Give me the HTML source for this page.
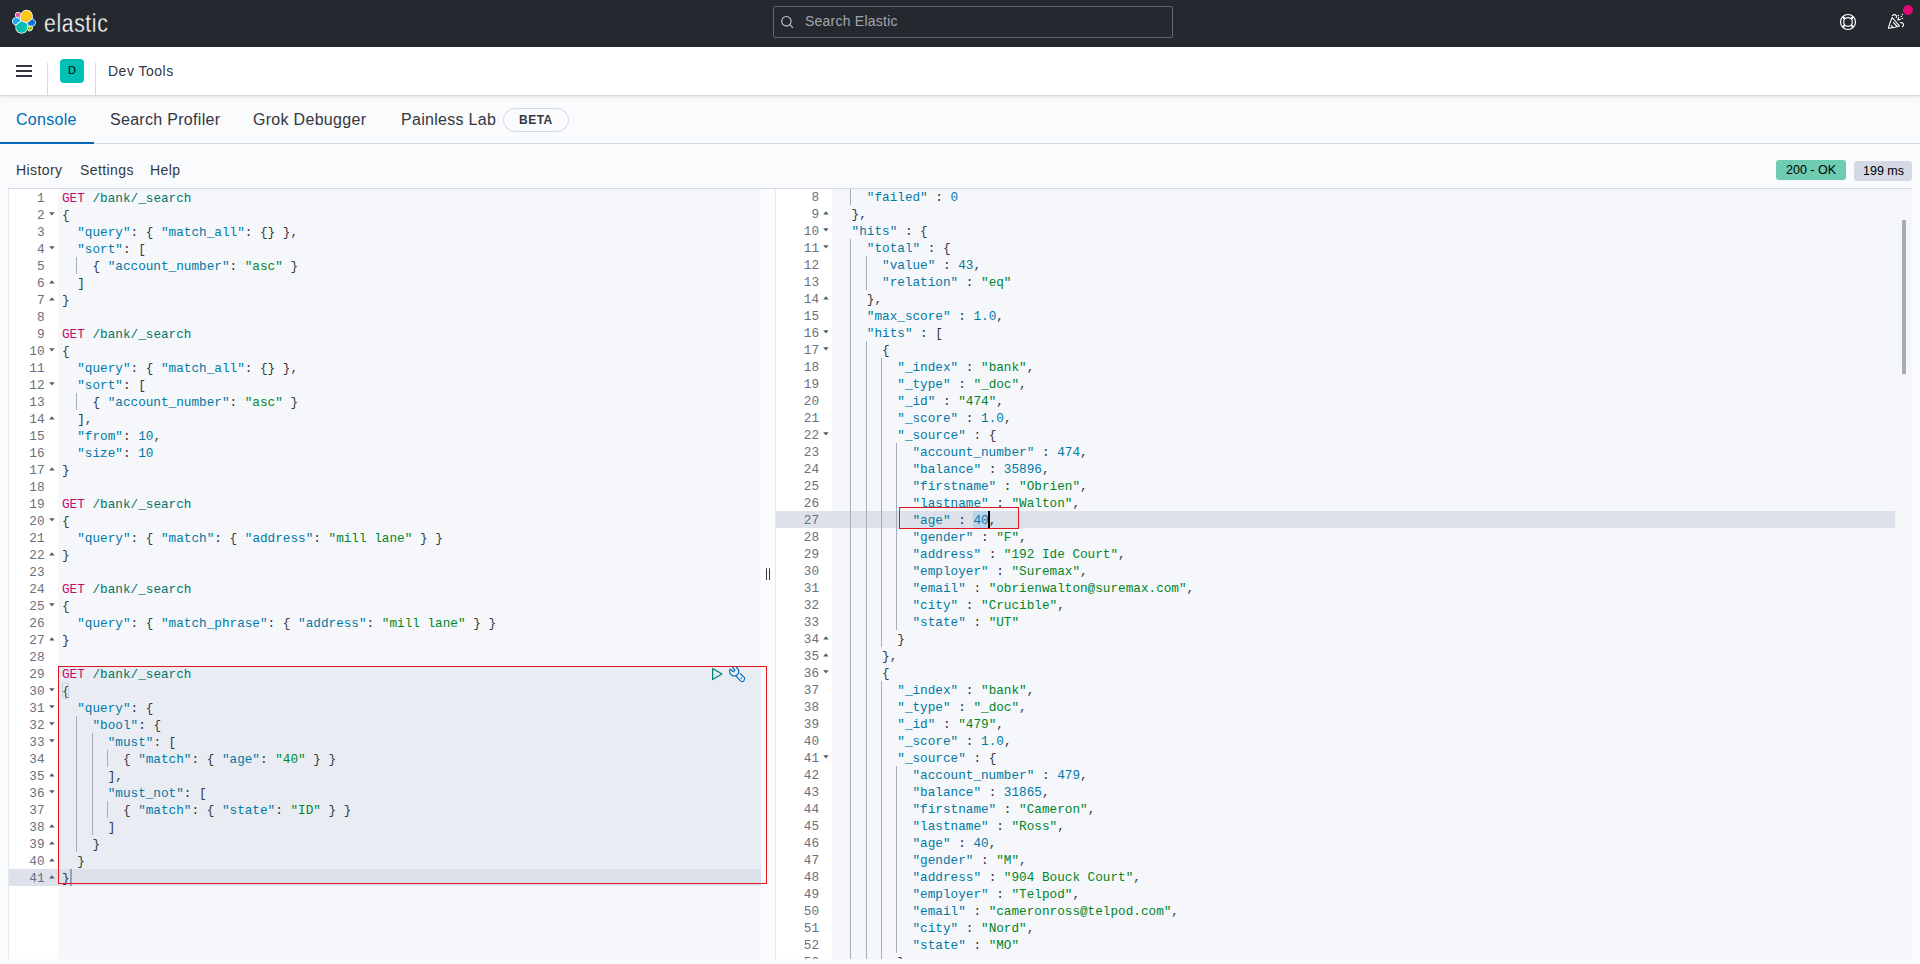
<!DOCTYPE html>
<html><head><meta charset="utf-8"><title>Dev Tools - Elastic</title>
<style>
*{box-sizing:border-box}
html,body{margin:0;padding:0}
body{width:1920px;height:964px;overflow:hidden;position:relative;background:#fafbfd;font-family:"Liberation Sans",sans-serif;color:#343741}
.abs{position:absolute}
#hdr{position:absolute;left:0;top:0;width:1920px;height:47px;background:#25282f}
#band{position:absolute;left:0;top:47px;width:1920px;height:49px;background:#fff;border-bottom:1px solid #d3dae6;box-shadow:0 1px 3px rgba(0,0,0,.1)}
.t{position:absolute;white-space:pre;line-height:1}
/* editors */
.ed{position:absolute;top:188px;height:771px;overflow:hidden}
.gut{position:absolute;background:#fff}
.cnt{position:absolute;background:#f5f7fa}
.ln,.gn{position:absolute;height:17px;line-height:17px;font-family:"Liberation Mono",monospace;font-size:12.7px;white-space:pre;color:#343741;padding-top:1px}
.gn{width:40px;text-align:right;color:#69707d}
.m{color:#c80a68}.url{color:#00756c}.k{color:#0079a5}.s{color:#00852a}.n{color:#0079a5}
.ig{position:absolute;width:1px;background:#a5adba}
.fd,.fu{position:absolute;width:0;height:0;border-left:2.6px solid transparent;border-right:2.6px solid transparent}
.fo{position:absolute;fill:#535862}
</style></head><body>
<div id="hdr">
  <svg class="abs" style="left:10px;top:8px" width="28" height="28" viewBox="0 0 28 28"><g stroke="#fff" stroke-width="1.5" stroke-linejoin="round" style="paint-order:stroke"><polygon fill="#fec514" points="11.04,8.13 11.91,5.23 13.94,3.19 16.26,2.47 18.88,2.90 20.91,4.65 22.07,7.26 22.07,9.88 21.49,11.04 16.85,14.52 11.62,12.78 10.75,10.46"/><polygon fill="#f04e98" points="5.81,6.10 7.26,4.65 9.58,4.94 10.17,6.10 9.88,8.42 8.71,9.00 6.39,8.71 5.81,7.55"/><polygon fill="#1ba9f5" points="2.90,12.20 4.36,10.17 6.68,9.88 9.58,11.04 10.46,12.78 5.81,16.85 3.78,15.68 2.76,13.94"/><polygon fill="#00bfb3" points="6.10,17.43 11.33,13.36 16.85,15.39 17.43,17.43 17.14,20.91 15.10,23.82 11.62,24.98 8.42,24.11 6.39,21.49"/><polygon fill="#0b6fd6" points="17.43,15.10 22.36,11.04 24.40,12.49 25.27,14.52 24.40,16.85 22.95,17.72 20.33,17.72 18.01,16.56"/><polygon fill="#93c90e" points="18.01,18.88 21.78,18.59 22.36,20.33 21.20,22.07 18.88,22.65 18.01,20.91"/></g></svg>
  <div class="t" style="left:44px;top:11px;font-size:25px;color:#fff;letter-spacing:.7px;transform:scaleX(.85);transform-origin:0 0;-webkit-text-stroke:0.35px #25282f">elastic</div>
  <div class="abs" style="left:773px;top:6px;width:400px;height:32px;border:1px solid #62666e;border-radius:2px;background:#25282f"></div>
  <svg class="abs" style="left:780px;top:15px" width="14" height="14" viewBox="0 0 14 14"><circle cx="6.4" cy="6.2" r="4.7" fill="none" stroke="#c5c9d0" stroke-width="1.1"/><path d="M9.8 9.6 L13 12.8" stroke="#c5c9d0" stroke-width="1.1"/></svg>
  <div class="t" style="left:805px;top:14.4px;font-size:14px;color:#a3a6ac;letter-spacing:.23px">Search Elastic</div>
  <svg class="abs" style="left:1838px;top:12px" width="20" height="20" viewBox="0 0 20 20">
    <g fill="none" stroke="#fff"><circle cx="10" cy="10" r="7.5" stroke-width="1.2"/><circle cx="10" cy="10" r="4.3" stroke-width="1.2"/>
    <path stroke-width="2.1" d="M6.9 6.9 L4.7 4.7 M13.1 6.9 L15.3 4.7 M6.9 13.1 L4.7 15.3 M13.1 13.1 L15.3 15.3"/></g>
  </svg>
  <svg class="abs" style="left:1884px;top:8px" width="28" height="24" viewBox="0 0 28 24">
    <g fill="none" stroke="#fff" stroke-width="1.1" stroke-linecap="round" stroke-linejoin="round">
      <path d="M4.4 20.1 Q6 14 8.2 9.5 L15.4 17.9 Q10 19.6 4.4 20.1 Z"/>
      <path d="M9.3 14.3 L12.8 18"/><path d="M7.3 17.5 L8.5 18.7"/>
      <path d="M8.3 7.6 Q10.4 5.6 12.3 7.6 Q12.8 8.6 12.2 9.6"/>
      <path d="M13.9 12 L14.6 9.4 M13.9 12 L16.3 11.4"/>
      <path d="M16.4 14.7 Q18.6 14.3 19.5 16.2 Q19.8 17.6 18.4 18.8"/>
    </g>
    <g fill="#fff"><circle cx="14.4" cy="7.5" r=".75"/><circle cx="18.4" cy="6.4" r=".75"/><circle cx="17.4" cy="8.5" r=".75"/><circle cx="18.4" cy="10.5" r=".75"/></g>
  </svg>
  <div class="abs" style="left:1902.6px;top:4.6px;width:10.6px;height:10.6px;border-radius:50%;background:#dd0a73"></div>
</div>
<div id="band">
  <div class="abs" style="left:16px;top:18px;width:16px;height:2px;background:#343741"></div><div class="abs" style="left:16px;top:23px;width:16px;height:2px;background:#343741"></div><div class="abs" style="left:16px;top:28px;width:16px;height:2px;background:#343741"></div>
  <div class="abs" style="left:47px;top:16px;width:1px;height:32px;background:#d3dae6"></div>
  <div class="abs" style="left:60px;top:12px;width:24px;height:24px;border-radius:4px;background:#00bfb3"></div>
  <div class="t" style="left:68px;top:18px;font-size:11px;color:#000">D</div>
  <div class="abs" style="left:95px;top:16px;width:1px;height:32px;background:#d3dae6"></div>
  <div class="t" style="left:108px;top:17px;font-size:14px;letter-spacing:.5px">Dev Tools</div>
</div>
<!-- tabs -->
<div class="t" style="left:16px;top:112px;font-size:16px;letter-spacing:.3px;color:#006bb4">Console</div>
<div class="t" style="left:110px;top:112px;font-size:16px;letter-spacing:.3px">Search Profiler</div>
<div class="t" style="left:253px;top:112px;font-size:16px;letter-spacing:.3px">Grok Debugger</div>
<div class="t" style="left:401px;top:112px;font-size:16px;letter-spacing:.3px">Painless Lab</div>
<div class="abs" style="left:503px;top:108px;width:66px;height:24px;border:1px solid #d3dae6;border-radius:12px"></div>
<div class="t" style="left:519px;top:114px;font-size:12px;font-weight:bold;letter-spacing:.5px">BETA</div>
<div class="abs" style="left:0;top:143px;width:1920px;height:1px;background:#d3dae6"></div>
<div class="abs" style="left:0;top:142px;width:94px;height:2px;background:#006bb4"></div>
<!-- menu -->
<div class="t" style="left:16px;top:163.4px;font-size:14px;letter-spacing:.4px">History</div>
<div class="t" style="left:80px;top:163.4px;font-size:14px;letter-spacing:.4px">Settings</div>
<div class="t" style="left:150px;top:163.4px;font-size:14px;letter-spacing:.4px">Help</div>
<div class="abs" style="left:1776px;top:160px;width:70px;height:20px;border-radius:3px;background:#6dccb1"></div>
<div class="t" style="left:1786px;top:164px;font-size:12.5px;color:#000">200 - OK</div>
<div class="abs" style="left:1854px;top:161px;width:58px;height:20px;border-radius:3px;background:#d3dae6"></div>
<div class="t" style="left:1863px;top:165px;font-size:12.5px;color:#000">199 ms</div>
<!-- editor frame -->
<div class="abs" style="left:8px;top:188px;width:1904px;height:1px;background:#d3dae6"></div>
<!-- left editor -->
<div class="abs" style="left:8px;top:189px;width:1px;height:770px;background:#e4e8ef"></div>
<div class="gut" style="left:9px;top:189px;width:49px;height:770px"></div>
<div class="cnt" style="left:58px;top:189px;width:703px;height:770px"></div>
<!-- request block highlight -->
<div class="abs" style="left:58px;top:666px;width:703px;height:203px;background:#e9edf3"></div>
<div class="abs" style="left:9px;top:869px;width:752px;height:17px;background:#dde2ea"></div>
<div class="ig" style="left:76px;top:257px;height:17px"></div>
<div class="ig" style="left:76px;top:393px;height:17px"></div>
<div class="ig" style="left:76px;top:716px;height:136px"></div>
<div class="ig" style="left:92px;top:733px;height:102px"></div>
<div class="ig" style="left:107px;top:750px;height:17px"></div>
<div class="ig" style="left:107px;top:801px;height:17px"></div>
<div class="gn" style="top:189px;left:4.60px">1</div>
<div class="gn" style="top:206px;left:4.60px">2</div>
<svg class="fo" style="top:212.4px;left:49.0px" width="6" height="4" viewBox="0 0 6 4"><path d="M0.2 0.3 H5.6 L2.9 3.5 Z"/></svg>
<div class="gn" style="top:223px;left:4.60px">3</div>
<div class="gn" style="top:240px;left:4.60px">4</div>
<svg class="fo" style="top:246.4px;left:49.0px" width="6" height="4" viewBox="0 0 6 4"><path d="M0.2 0.3 H5.6 L2.9 3.5 Z"/></svg>
<div class="gn" style="top:257px;left:4.60px">5</div>
<div class="gn" style="top:274px;left:4.60px">6</div>
<svg class="fo" style="top:280.0px;left:49.0px" width="6" height="4" viewBox="0 0 6 4"><path d="M0.2 3.5 H5.6 L2.9 0.3 Z"/></svg>
<div class="gn" style="top:291px;left:4.60px">7</div>
<svg class="fo" style="top:297.0px;left:49.0px" width="6" height="4" viewBox="0 0 6 4"><path d="M0.2 3.5 H5.6 L2.9 0.3 Z"/></svg>
<div class="gn" style="top:308px;left:4.60px">8</div>
<div class="gn" style="top:325px;left:4.60px">9</div>
<div class="gn" style="top:342px;left:4.60px">10</div>
<svg class="fo" style="top:348.4px;left:49.0px" width="6" height="4" viewBox="0 0 6 4"><path d="M0.2 0.3 H5.6 L2.9 3.5 Z"/></svg>
<div class="gn" style="top:359px;left:4.60px">11</div>
<div class="gn" style="top:376px;left:4.60px">12</div>
<svg class="fo" style="top:382.4px;left:49.0px" width="6" height="4" viewBox="0 0 6 4"><path d="M0.2 0.3 H5.6 L2.9 3.5 Z"/></svg>
<div class="gn" style="top:393px;left:4.60px">13</div>
<div class="gn" style="top:410px;left:4.60px">14</div>
<svg class="fo" style="top:416.0px;left:49.0px" width="6" height="4" viewBox="0 0 6 4"><path d="M0.2 3.5 H5.6 L2.9 0.3 Z"/></svg>
<div class="gn" style="top:427px;left:4.60px">15</div>
<div class="gn" style="top:444px;left:4.60px">16</div>
<div class="gn" style="top:461px;left:4.60px">17</div>
<svg class="fo" style="top:467.0px;left:49.0px" width="6" height="4" viewBox="0 0 6 4"><path d="M0.2 3.5 H5.6 L2.9 0.3 Z"/></svg>
<div class="gn" style="top:478px;left:4.60px">18</div>
<div class="gn" style="top:495px;left:4.60px">19</div>
<div class="gn" style="top:512px;left:4.60px">20</div>
<svg class="fo" style="top:518.4px;left:49.0px" width="6" height="4" viewBox="0 0 6 4"><path d="M0.2 0.3 H5.6 L2.9 3.5 Z"/></svg>
<div class="gn" style="top:529px;left:4.60px">21</div>
<div class="gn" style="top:546px;left:4.60px">22</div>
<svg class="fo" style="top:552.0px;left:49.0px" width="6" height="4" viewBox="0 0 6 4"><path d="M0.2 3.5 H5.6 L2.9 0.3 Z"/></svg>
<div class="gn" style="top:563px;left:4.60px">23</div>
<div class="gn" style="top:580px;left:4.60px">24</div>
<div class="gn" style="top:597px;left:4.60px">25</div>
<svg class="fo" style="top:603.4px;left:49.0px" width="6" height="4" viewBox="0 0 6 4"><path d="M0.2 0.3 H5.6 L2.9 3.5 Z"/></svg>
<div class="gn" style="top:614px;left:4.60px">26</div>
<div class="gn" style="top:631px;left:4.60px">27</div>
<svg class="fo" style="top:637.0px;left:49.0px" width="6" height="4" viewBox="0 0 6 4"><path d="M0.2 3.5 H5.6 L2.9 0.3 Z"/></svg>
<div class="gn" style="top:648px;left:4.60px">28</div>
<div class="gn" style="top:665px;left:4.60px">29</div>
<div class="gn" style="top:682px;left:4.60px">30</div>
<svg class="fo" style="top:688.4px;left:49.0px" width="6" height="4" viewBox="0 0 6 4"><path d="M0.2 0.3 H5.6 L2.9 3.5 Z"/></svg>
<div class="gn" style="top:699px;left:4.60px">31</div>
<svg class="fo" style="top:705.4px;left:49.0px" width="6" height="4" viewBox="0 0 6 4"><path d="M0.2 0.3 H5.6 L2.9 3.5 Z"/></svg>
<div class="gn" style="top:716px;left:4.60px">32</div>
<svg class="fo" style="top:722.4px;left:49.0px" width="6" height="4" viewBox="0 0 6 4"><path d="M0.2 0.3 H5.6 L2.9 3.5 Z"/></svg>
<div class="gn" style="top:733px;left:4.60px">33</div>
<svg class="fo" style="top:739.4px;left:49.0px" width="6" height="4" viewBox="0 0 6 4"><path d="M0.2 0.3 H5.6 L2.9 3.5 Z"/></svg>
<div class="gn" style="top:750px;left:4.60px">34</div>
<div class="gn" style="top:767px;left:4.60px">35</div>
<svg class="fo" style="top:773.0px;left:49.0px" width="6" height="4" viewBox="0 0 6 4"><path d="M0.2 3.5 H5.6 L2.9 0.3 Z"/></svg>
<div class="gn" style="top:784px;left:4.60px">36</div>
<svg class="fo" style="top:790.4px;left:49.0px" width="6" height="4" viewBox="0 0 6 4"><path d="M0.2 0.3 H5.6 L2.9 3.5 Z"/></svg>
<div class="gn" style="top:801px;left:4.60px">37</div>
<div class="gn" style="top:818px;left:4.60px">38</div>
<svg class="fo" style="top:824.0px;left:49.0px" width="6" height="4" viewBox="0 0 6 4"><path d="M0.2 3.5 H5.6 L2.9 0.3 Z"/></svg>
<div class="gn" style="top:835px;left:4.60px">39</div>
<svg class="fo" style="top:841.0px;left:49.0px" width="6" height="4" viewBox="0 0 6 4"><path d="M0.2 3.5 H5.6 L2.9 0.3 Z"/></svg>
<div class="gn" style="top:852px;left:4.60px">40</div>
<svg class="fo" style="top:858.0px;left:49.0px" width="6" height="4" viewBox="0 0 6 4"><path d="M0.2 3.5 H5.6 L2.9 0.3 Z"/></svg>
<div class="gn" style="top:869px;left:4.60px">41</div>
<svg class="fo" style="top:875.0px;left:49.0px" width="6" height="4" viewBox="0 0 6 4"><path d="M0.2 3.5 H5.6 L2.9 0.3 Z"/></svg>
<div class="ln" style="top:189px;left:62.00px"><span class="m">GET</span> <span class="url">/bank/_search</span></div>
<div class="ln" style="top:206px;left:62.00px">{</div>
<div class="ln" style="top:223px;left:62.00px">  <span class="k">&quot;query&quot;</span>: { <span class="k">&quot;match_all&quot;</span>: {} },</div>
<div class="ln" style="top:240px;left:62.00px">  <span class="k">&quot;sort&quot;</span>: [</div>
<div class="ln" style="top:257px;left:62.00px">    { <span class="k">&quot;account_number&quot;</span>: <span class="s">&quot;asc&quot;</span> }</div>
<div class="ln" style="top:274px;left:62.00px">  ]</div>
<div class="ln" style="top:291px;left:62.00px">}</div>
<div class="ln" style="top:308px;left:62.00px"></div>
<div class="ln" style="top:325px;left:62.00px"><span class="m">GET</span> <span class="url">/bank/_search</span></div>
<div class="ln" style="top:342px;left:62.00px">{</div>
<div class="ln" style="top:359px;left:62.00px">  <span class="k">&quot;query&quot;</span>: { <span class="k">&quot;match_all&quot;</span>: {} },</div>
<div class="ln" style="top:376px;left:62.00px">  <span class="k">&quot;sort&quot;</span>: [</div>
<div class="ln" style="top:393px;left:62.00px">    { <span class="k">&quot;account_number&quot;</span>: <span class="s">&quot;asc&quot;</span> }</div>
<div class="ln" style="top:410px;left:62.00px">  ],</div>
<div class="ln" style="top:427px;left:62.00px">  <span class="k">&quot;from&quot;</span>: <span class="n">10</span>,</div>
<div class="ln" style="top:444px;left:62.00px">  <span class="k">&quot;size&quot;</span>: <span class="n">10</span></div>
<div class="ln" style="top:461px;left:62.00px">}</div>
<div class="ln" style="top:478px;left:62.00px"></div>
<div class="ln" style="top:495px;left:62.00px"><span class="m">GET</span> <span class="url">/bank/_search</span></div>
<div class="ln" style="top:512px;left:62.00px">{</div>
<div class="ln" style="top:529px;left:62.00px">  <span class="k">&quot;query&quot;</span>: { <span class="k">&quot;match&quot;</span>: { <span class="k">&quot;address&quot;</span>: <span class="s">&quot;mill lane&quot;</span> } }</div>
<div class="ln" style="top:546px;left:62.00px">}</div>
<div class="ln" style="top:563px;left:62.00px"></div>
<div class="ln" style="top:580px;left:62.00px"><span class="m">GET</span> <span class="url">/bank/_search</span></div>
<div class="ln" style="top:597px;left:62.00px">{</div>
<div class="ln" style="top:614px;left:62.00px">  <span class="k">&quot;query&quot;</span>: { <span class="k">&quot;match_phrase&quot;</span>: { <span class="k">&quot;address&quot;</span>: <span class="s">&quot;mill lane&quot;</span> } }</div>
<div class="ln" style="top:631px;left:62.00px">}</div>
<div class="ln" style="top:648px;left:62.00px"></div>
<div class="ln" style="top:665px;left:62.00px"><span class="m">GET</span> <span class="url">/bank/_search</span></div>
<div class="ln" style="top:682px;left:62.00px">{</div>
<div class="ln" style="top:699px;left:62.00px">  <span class="k">&quot;query&quot;</span>: {</div>
<div class="ln" style="top:716px;left:62.00px">    <span class="k">&quot;bool&quot;</span>: {</div>
<div class="ln" style="top:733px;left:62.00px">      <span class="k">&quot;must&quot;</span>: [</div>
<div class="ln" style="top:750px;left:62.00px">        { <span class="k">&quot;match&quot;</span>: { <span class="k">&quot;age&quot;</span>: <span class="s">&quot;40&quot;</span> } }</div>
<div class="ln" style="top:767px;left:62.00px">      ],</div>
<div class="ln" style="top:784px;left:62.00px">      <span class="k">&quot;must_not&quot;</span>: [</div>
<div class="ln" style="top:801px;left:62.00px">        { <span class="k">&quot;match&quot;</span>: { <span class="k">&quot;state&quot;</span>: <span class="s">&quot;ID&quot;</span> } }</div>
<div class="ln" style="top:818px;left:62.00px">      ]</div>
<div class="ln" style="top:835px;left:62.00px">    }</div>
<div class="ln" style="top:852px;left:62.00px">  }</div>
<div class="ln" style="top:869px;left:62.00px">}</div>
<div class="abs" style="left:61.5px;top:681.5px;width:7.5px;height:17px;border:1px solid #c9ced6;border-radius:3px"></div>
<div class="abs" style="left:70px;top:869px;width:1.5px;height:17px;background:#98a1b0"></div>
<div class="abs" style="left:58px;top:666px;width:709px;height:218px;border:1px solid #e0151f"></div>
<svg class="abs" style="left:711px;top:667px" width="13" height="14" viewBox="0 0 13 14"><path d="M1.6 1.5 L11 7 L1.6 12.5 Z" fill="none" stroke="#017d73" stroke-width="1.2" stroke-linejoin="round"/></svg>
<svg class="abs" style="left:726px;top:664px" width="22" height="20" viewBox="0 0 22 20"><g fill="none" stroke="#006bb4" stroke-width="1.15" stroke-linejoin="round"><path d="M6.4 3.1 L8.9 6.2 L7.5 7.7 L4.15 5.19 A4.6 4.6 0 1 0 9.96 3.11"/><path d="M9.34 11.3 L14.5 16.9 A2.6 2.6 0 0 0 18.4 13.6 L14.2 9.5"/></g><circle cx="15.1" cy="14.1" r=".75" fill="#006bb4"/></svg>
<!-- resize handle -->
<div class="abs" style="left:766px;top:568px;width:1.2px;height:12px;background:#343741;border-radius:1px"></div>
<div class="abs" style="left:769px;top:568px;width:1.2px;height:12px;background:#343741;border-radius:1px"></div>
<!-- right editor -->
<div class="abs" style="left:775px;top:189px;width:1px;height:770px;background:#e4e8ef"></div>
<div class="gut" style="left:776px;top:189px;width:56px;height:770px"></div>
<div class="cnt" style="left:832px;top:189px;width:1080px;height:770px"></div>
<div class="abs" style="left:776px;top:511px;width:1119px;height:17px;background:#dde2ea"></div>
<div class="abs" style="left:973px;top:511px;width:15px;height:17px;background:#b9d4ea"></div>
<div class="ed" style="left:775px;width:1137px;top:189px;height:770px">
<div style="position:absolute;left:-775px;top:-189px;width:1920px;height:964px">
<div class="ig" style="left:850px;top:188px;height:17px"></div>
<div class="ig" style="left:850px;top:239px;height:731px"></div>
<div class="ig" style="left:866px;top:256px;height:34px"></div>
<div class="ig" style="left:866px;top:341px;height:629px"></div>
<div class="ig" style="left:881px;top:358px;height:289px"></div>
<div class="ig" style="left:881px;top:681px;height:289px"></div>
<div class="ig" style="left:896px;top:443px;height:187px"></div>
<div class="ig" style="left:896px;top:766px;height:187px"></div>
<div class="gn" style="top:188px;left:779.00px">8</div>
<div class="gn" style="top:205px;left:779.00px">9</div>
<svg class="fo" style="top:211.0px;left:823.0px" width="6" height="4" viewBox="0 0 6 4"><path d="M0.2 3.5 H5.6 L2.9 0.3 Z"/></svg>
<div class="gn" style="top:222px;left:779.00px">10</div>
<svg class="fo" style="top:228.4px;left:823.0px" width="6" height="4" viewBox="0 0 6 4"><path d="M0.2 0.3 H5.6 L2.9 3.5 Z"/></svg>
<div class="gn" style="top:239px;left:779.00px">11</div>
<svg class="fo" style="top:245.4px;left:823.0px" width="6" height="4" viewBox="0 0 6 4"><path d="M0.2 0.3 H5.6 L2.9 3.5 Z"/></svg>
<div class="gn" style="top:256px;left:779.00px">12</div>
<div class="gn" style="top:273px;left:779.00px">13</div>
<div class="gn" style="top:290px;left:779.00px">14</div>
<svg class="fo" style="top:296.0px;left:823.0px" width="6" height="4" viewBox="0 0 6 4"><path d="M0.2 3.5 H5.6 L2.9 0.3 Z"/></svg>
<div class="gn" style="top:307px;left:779.00px">15</div>
<div class="gn" style="top:324px;left:779.00px">16</div>
<svg class="fo" style="top:330.4px;left:823.0px" width="6" height="4" viewBox="0 0 6 4"><path d="M0.2 0.3 H5.6 L2.9 3.5 Z"/></svg>
<div class="gn" style="top:341px;left:779.00px">17</div>
<svg class="fo" style="top:347.4px;left:823.0px" width="6" height="4" viewBox="0 0 6 4"><path d="M0.2 0.3 H5.6 L2.9 3.5 Z"/></svg>
<div class="gn" style="top:358px;left:779.00px">18</div>
<div class="gn" style="top:375px;left:779.00px">19</div>
<div class="gn" style="top:392px;left:779.00px">20</div>
<div class="gn" style="top:409px;left:779.00px">21</div>
<div class="gn" style="top:426px;left:779.00px">22</div>
<svg class="fo" style="top:432.4px;left:823.0px" width="6" height="4" viewBox="0 0 6 4"><path d="M0.2 0.3 H5.6 L2.9 3.5 Z"/></svg>
<div class="gn" style="top:443px;left:779.00px">23</div>
<div class="gn" style="top:460px;left:779.00px">24</div>
<div class="gn" style="top:477px;left:779.00px">25</div>
<div class="gn" style="top:494px;left:779.00px">26</div>
<div class="gn" style="top:511px;left:779.00px">27</div>
<div class="gn" style="top:528px;left:779.00px">28</div>
<div class="gn" style="top:545px;left:779.00px">29</div>
<div class="gn" style="top:562px;left:779.00px">30</div>
<div class="gn" style="top:579px;left:779.00px">31</div>
<div class="gn" style="top:596px;left:779.00px">32</div>
<div class="gn" style="top:613px;left:779.00px">33</div>
<div class="gn" style="top:630px;left:779.00px">34</div>
<svg class="fo" style="top:636.0px;left:823.0px" width="6" height="4" viewBox="0 0 6 4"><path d="M0.2 3.5 H5.6 L2.9 0.3 Z"/></svg>
<div class="gn" style="top:647px;left:779.00px">35</div>
<svg class="fo" style="top:653.0px;left:823.0px" width="6" height="4" viewBox="0 0 6 4"><path d="M0.2 3.5 H5.6 L2.9 0.3 Z"/></svg>
<div class="gn" style="top:664px;left:779.00px">36</div>
<svg class="fo" style="top:670.4px;left:823.0px" width="6" height="4" viewBox="0 0 6 4"><path d="M0.2 0.3 H5.6 L2.9 3.5 Z"/></svg>
<div class="gn" style="top:681px;left:779.00px">37</div>
<div class="gn" style="top:698px;left:779.00px">38</div>
<div class="gn" style="top:715px;left:779.00px">39</div>
<div class="gn" style="top:732px;left:779.00px">40</div>
<div class="gn" style="top:749px;left:779.00px">41</div>
<svg class="fo" style="top:755.4px;left:823.0px" width="6" height="4" viewBox="0 0 6 4"><path d="M0.2 0.3 H5.6 L2.9 3.5 Z"/></svg>
<div class="gn" style="top:766px;left:779.00px">42</div>
<div class="gn" style="top:783px;left:779.00px">43</div>
<div class="gn" style="top:800px;left:779.00px">44</div>
<div class="gn" style="top:817px;left:779.00px">45</div>
<div class="gn" style="top:834px;left:779.00px">46</div>
<div class="gn" style="top:851px;left:779.00px">47</div>
<div class="gn" style="top:868px;left:779.00px">48</div>
<div class="gn" style="top:885px;left:779.00px">49</div>
<div class="gn" style="top:902px;left:779.00px">50</div>
<div class="gn" style="top:919px;left:779.00px">51</div>
<div class="gn" style="top:936px;left:779.00px">52</div>
<div class="gn" style="top:953px;left:779.00px">53</div>
<svg class="fo" style="top:959.0px;left:823.0px" width="6" height="4" viewBox="0 0 6 4"><path d="M0.2 3.5 H5.6 L2.9 0.3 Z"/></svg>
<div class="ln" style="top:188px;left:836.35px">    <span class="k">&quot;failed&quot;</span> : <span class="n">0</span></div>
<div class="ln" style="top:205px;left:836.35px">  },</div>
<div class="ln" style="top:222px;left:836.35px">  <span class="k">&quot;hits&quot;</span> : {</div>
<div class="ln" style="top:239px;left:836.35px">    <span class="k">&quot;total&quot;</span> : {</div>
<div class="ln" style="top:256px;left:836.35px">      <span class="k">&quot;value&quot;</span> : <span class="n">43</span>,</div>
<div class="ln" style="top:273px;left:836.35px">      <span class="k">&quot;relation&quot;</span> : <span class="s">&quot;eq&quot;</span></div>
<div class="ln" style="top:290px;left:836.35px">    },</div>
<div class="ln" style="top:307px;left:836.35px">    <span class="k">&quot;max_score&quot;</span> : <span class="n">1.0</span>,</div>
<div class="ln" style="top:324px;left:836.35px">    <span class="k">&quot;hits&quot;</span> : [</div>
<div class="ln" style="top:341px;left:836.35px">      {</div>
<div class="ln" style="top:358px;left:836.35px">        <span class="k">&quot;_index&quot;</span> : <span class="s">&quot;bank&quot;</span>,</div>
<div class="ln" style="top:375px;left:836.35px">        <span class="k">&quot;_type&quot;</span> : <span class="s">&quot;_doc&quot;</span>,</div>
<div class="ln" style="top:392px;left:836.35px">        <span class="k">&quot;_id&quot;</span> : <span class="s">&quot;474&quot;</span>,</div>
<div class="ln" style="top:409px;left:836.35px">        <span class="k">&quot;_score&quot;</span> : <span class="n">1.0</span>,</div>
<div class="ln" style="top:426px;left:836.35px">        <span class="k">&quot;_source&quot;</span> : {</div>
<div class="ln" style="top:443px;left:836.35px">          <span class="k">&quot;account_number&quot;</span> : <span class="n">474</span>,</div>
<div class="ln" style="top:460px;left:836.35px">          <span class="k">&quot;balance&quot;</span> : <span class="n">35896</span>,</div>
<div class="ln" style="top:477px;left:836.35px">          <span class="k">&quot;firstname&quot;</span> : <span class="s">&quot;Obrien&quot;</span>,</div>
<div class="ln" style="top:494px;left:836.35px">          <span class="k">&quot;lastname&quot;</span> : <span class="s">&quot;Walton&quot;</span>,</div>
<div class="ln" style="top:511px;left:836.35px">          <span class="k">&quot;age&quot;</span> : <span class="n">40</span>,</div>
<div class="ln" style="top:528px;left:836.35px">          <span class="k">&quot;gender&quot;</span> : <span class="s">&quot;F&quot;</span>,</div>
<div class="ln" style="top:545px;left:836.35px">          <span class="k">&quot;address&quot;</span> : <span class="s">&quot;192 Ide Court&quot;</span>,</div>
<div class="ln" style="top:562px;left:836.35px">          <span class="k">&quot;employer&quot;</span> : <span class="s">&quot;Suremax&quot;</span>,</div>
<div class="ln" style="top:579px;left:836.35px">          <span class="k">&quot;email&quot;</span> : <span class="s">&quot;obrienwalton@suremax.com&quot;</span>,</div>
<div class="ln" style="top:596px;left:836.35px">          <span class="k">&quot;city&quot;</span> : <span class="s">&quot;Crucible&quot;</span>,</div>
<div class="ln" style="top:613px;left:836.35px">          <span class="k">&quot;state&quot;</span> : <span class="s">&quot;UT&quot;</span></div>
<div class="ln" style="top:630px;left:836.35px">        }</div>
<div class="ln" style="top:647px;left:836.35px">      },</div>
<div class="ln" style="top:664px;left:836.35px">      {</div>
<div class="ln" style="top:681px;left:836.35px">        <span class="k">&quot;_index&quot;</span> : <span class="s">&quot;bank&quot;</span>,</div>
<div class="ln" style="top:698px;left:836.35px">        <span class="k">&quot;_type&quot;</span> : <span class="s">&quot;_doc&quot;</span>,</div>
<div class="ln" style="top:715px;left:836.35px">        <span class="k">&quot;_id&quot;</span> : <span class="s">&quot;479&quot;</span>,</div>
<div class="ln" style="top:732px;left:836.35px">        <span class="k">&quot;_score&quot;</span> : <span class="n">1.0</span>,</div>
<div class="ln" style="top:749px;left:836.35px">        <span class="k">&quot;_source&quot;</span> : {</div>
<div class="ln" style="top:766px;left:836.35px">          <span class="k">&quot;account_number&quot;</span> : <span class="n">479</span>,</div>
<div class="ln" style="top:783px;left:836.35px">          <span class="k">&quot;balance&quot;</span> : <span class="n">31865</span>,</div>
<div class="ln" style="top:800px;left:836.35px">          <span class="k">&quot;firstname&quot;</span> : <span class="s">&quot;Cameron&quot;</span>,</div>
<div class="ln" style="top:817px;left:836.35px">          <span class="k">&quot;lastname&quot;</span> : <span class="s">&quot;Ross&quot;</span>,</div>
<div class="ln" style="top:834px;left:836.35px">          <span class="k">&quot;age&quot;</span> : <span class="n">40</span>,</div>
<div class="ln" style="top:851px;left:836.35px">          <span class="k">&quot;gender&quot;</span> : <span class="s">&quot;M&quot;</span>,</div>
<div class="ln" style="top:868px;left:836.35px">          <span class="k">&quot;address&quot;</span> : <span class="s">&quot;904 Bouck Court&quot;</span>,</div>
<div class="ln" style="top:885px;left:836.35px">          <span class="k">&quot;employer&quot;</span> : <span class="s">&quot;Telpod&quot;</span>,</div>
<div class="ln" style="top:902px;left:836.35px">          <span class="k">&quot;email&quot;</span> : <span class="s">&quot;cameronross@telpod.com&quot;</span>,</div>
<div class="ln" style="top:919px;left:836.35px">          <span class="k">&quot;city&quot;</span> : <span class="s">&quot;Nord&quot;</span>,</div>
<div class="ln" style="top:936px;left:836.35px">          <span class="k">&quot;state&quot;</span> : <span class="s">&quot;MO&quot;</span></div>
<div class="ln" style="top:953px;left:836.35px">        }</div>
</div></div>
<div class="abs" style="left:988px;top:511px;width:2px;height:17px;background:#000"></div>
<div class="abs" style="left:899px;top:507px;width:120px;height:22px;border:1.5px solid #e0151f"></div>
<div class="abs" style="left:1902px;top:220px;width:4px;height:154px;background:#a9aeb6"></div>
</body></html>
